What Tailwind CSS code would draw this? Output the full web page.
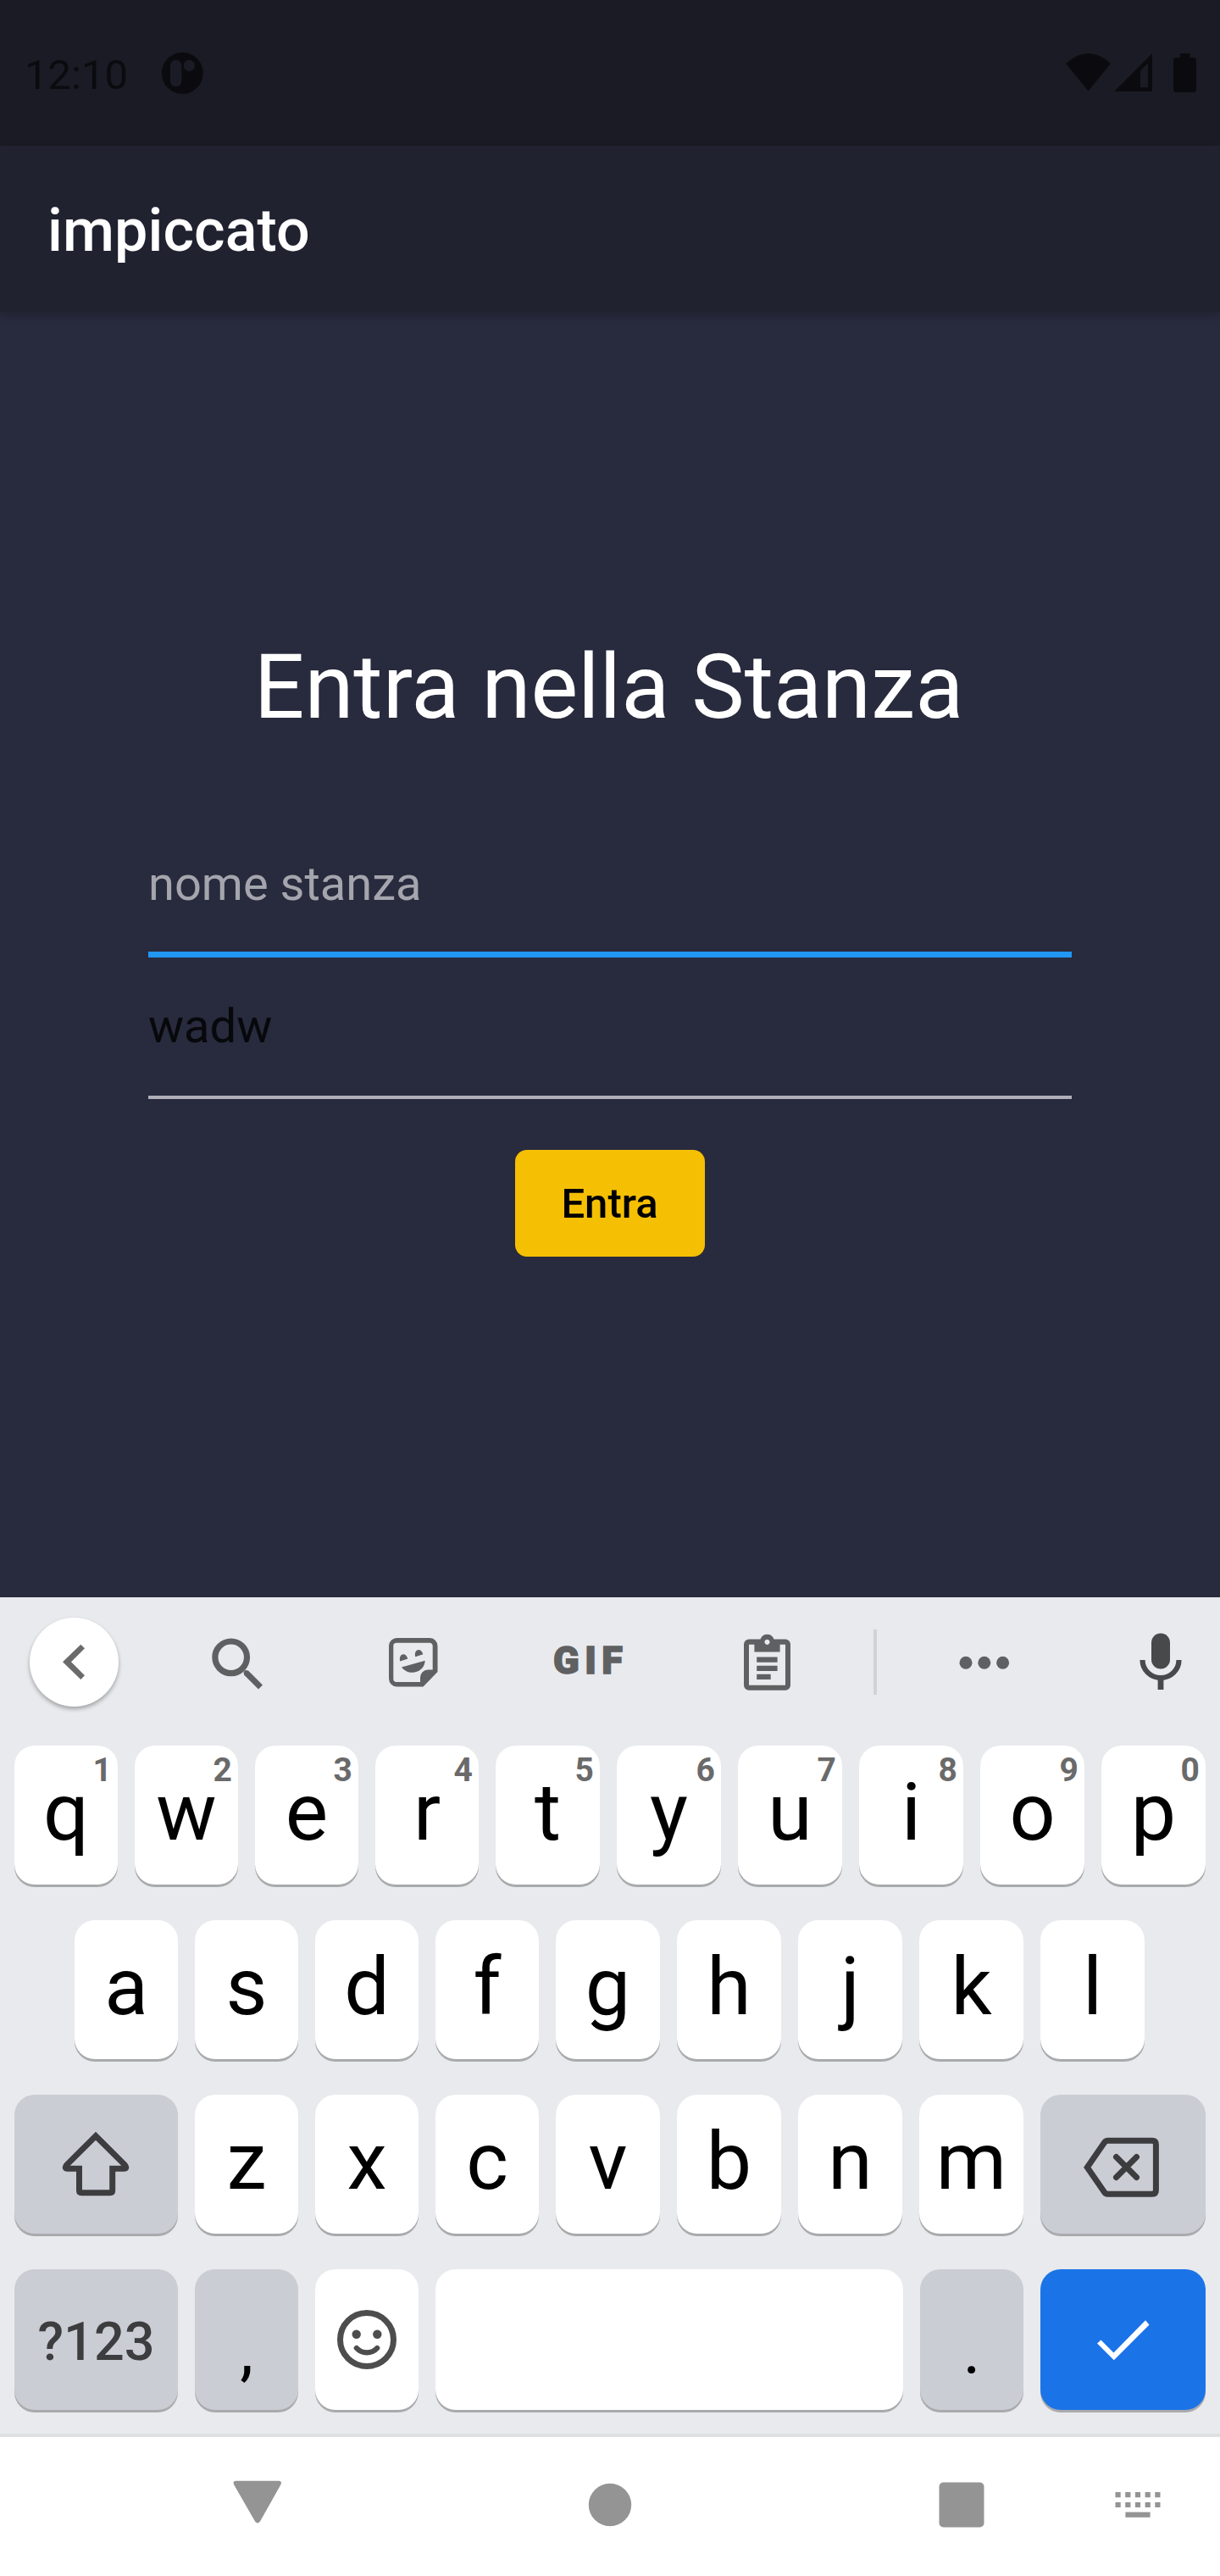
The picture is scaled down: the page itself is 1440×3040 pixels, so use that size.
<!DOCTYPE html>
<html lang="it">
<head>
<meta charset="utf-8">
<title>impiccato</title>
<script src="https://cdn.jsdelivr.net/npm/@tailwindcss/browser@4"></script>
</head>
<body class="w-[1440px] h-[3040px] overflow-hidden bg-[#282a3d] font-[Roboto,sans-serif] flex flex-col">

<!-- status bar -->
<header class="h-[172px] shrink-0 bg-[#1b1b25] flex justify-between text-[#0b0b0f]">
  <div class="flex pl-[29px] w-[260px] justify-between">
    <span class="text-[49px] leading-[177px]">12:10</span>
    <svg class="w-[70px] h-[172px]" viewBox="190 0 70 172"><circle cx="215.3" cy="86.3" r="24.5" fill="#0b0b0f"/><rect x="201" y="70.7" width="13.4" height="31.4" rx="6.7" fill="#1b1b25"/><circle cx="223.3" cy="77.4" r="6.6" fill="#1b1b25"/></svg>
  </div>
  <svg class="w-[190px] h-[172px]" viewBox="1250 0 190 172" fill="#0b0b0f">
    <path d="M1258 75Q1284.5 51 1311 75L1284.5 107.5Z"/>
    <path fill-rule="evenodd" d="M1315 108L1360 63V108ZM1346 83.5L1355 74.5V103H1346Z"/>
    <path d="M1393 63h11.5v5h4.5a3 3 0 0 1 3 3v35a3 3 0 0 1-3 3h-21a3 3 0 0 1-3-3V71a3 3 0 0 1 3-3h5z"/>
  </svg>
</header>

<!-- app bar -->
<div class="h-[196px] shrink-0 bg-[#212230] pl-14 shadow-[0_4px_10px_rgba(0,0,0,0.2)]">
  <h1 class="text-[70px] leading-[200px] font-medium tracking-[0.1px] text-white">impiccato</h1>
</div>

<main class="h-[1517px] shrink-0 flex flex-col items-center pt-[384px]">
  <h2 class="pr-[3px] text-[105px] leading-[120px] text-white">Entra nella Stanza</h2>
  <div class="w-[1090px] mt-[138px] h-[120px] border-b-[7px] border-[#2196f3] text-[56px] leading-[66px] text-[#a4a5ad]">nome stanza</div>
  <div class="w-[1090px] mt-[48px] h-[119px] border-b-[4px] border-[#b0aeb9] text-[56px] leading-[66px] text-[#07080b]">wadw</div>
  <button class="mt-[60px] w-[224px] h-[126px] rounded-[14px] bg-[#f5bf03] pt-[2px] pr-[1px] text-black text-[49px] font-medium">Entra</button>
</main>

<!-- keyboard -->
<section class="h-[987px] shrink-0 bg-[#e8eaed]">
  <div class="h-[153px] pl-[35px] flex items-center text-[#5f6062]">
    <div class="size-[105px] rounded-full bg-white shadow-[0_3px_5px_rgba(0,0,0,0.3)]">
      <svg class="size-[105px]" viewBox="35 1909 105 105" fill="#6b6b6b"><path d="M74 1961.3L95.3 1940.7L100 1945.3L84 1961.3L100 1977.3L95.3 1982Z"/></svg>
    </div>
    <svg class="ml-[100px] size-20" viewBox="240 1921.5 80 80" fill="currentColor"><circle cx="272.7" cy="1955.3" r="18.8" fill="none" stroke="currentColor" stroke-width="7.2"/><path d="M287.7 1972.7L289.3 1970.5L293 1971L310 1988L305 1993L288 1976Z"/></svg>
    <svg class="ml-[127px] size-20" viewBox="447 1921.5 80 80" fill="currentColor"><path fill-rule="evenodd" d="M468.5 1932.5H507a9.5 9.5 0 0 1 9.5 9.5V1972.5L499.5 1990H468.5a9.5 9.5 0 0 1-9.5-9.5V1942a9.5 9.5 0 0 1 9.5-9.5zM468 1938.3a3.7 3.7 0 0 0-3.7 3.7V1980.7a3.7 3.7 0 0 0 3.7 3.7H496V1979a9 9 0 0 1 9-9H510.7V1942a3.7 3.7 0 0 0-3.7-3.7z"/><path d="M472.3 1960c-2.5-8.5 6.5-12 9-3zM490.3 1954.8c-2.5-8.5 6.5-12 9-3zM474 1967L501.7 1959.3C501 1974 482 1978 474 1967z"/></svg>
    <span class="ml-[126px] w-[84px] text-[45px] leading-[56px] pb-1 font-black tracking-[6.5px] whitespace-nowrap [-webkit-text-stroke:1.5px_currentColor]">GIF</span>
    <svg class="ml-[128px] size-20 shrink-0" viewBox="865 1921.5 80 80" fill="currentColor"><path fill-rule="evenodd" d="M884 1934H897.5a8.5 8.5 0 0 1 16 0H927a6 6 0 0 1 6 6V1988.3a6 6 0 0 1-6 6H884a6 6 0 0 1-6-6V1940a6 6 0 0 1 6-6zM884 1940.3V1988.3H927V1940.3H920.6V1949H890.4V1940.3zM905.5 1934.2a3.1 3.1 0 1 0 0.01 0z"/><path d="M893.2 1955h24.4v6.2h-24.4zM893.2 1965.2h24.4v6.2h-24.4zM893.2 1975.2h16.5v6.2h-16.5z"/></svg>
    <div class="ml-[86px] w-1 h-[77px] bg-[#d0d2d6]"></div>
    <svg class="ml-[86px] size-20 shrink-0" viewBox="1121 1921.5 80 80" fill="currentColor"><circle cx="1140" cy="1961.7" r="7.5"/><circle cx="1161.8" cy="1961.7" r="7.5"/><circle cx="1183.6" cy="1961.7" r="7.5"/></svg>
    <svg class="ml-[129px] size-20 shrink-0" viewBox="1330 1921.5 80 80" fill="#48494b"><rect x="1359" y="1927" width="22" height="42" rx="11"/><path d="M1348.5 1958.5a21.5 21 0 0 0 43 0" fill="none" stroke="#48494b" stroke-width="6.2"/><path d="M1366.6 1979h6.8v14.5h-6.8z"/></svg>
  </div>

  <div class="px-[17px] pt-[22px] grid gap-y-[42px]">
    <div class="grid grid-cols-[repeat(4,122px)_repeat(6,123px)] gap-x-5 h-[164px]" data-keys="qwertyuiop" data-hints="1234567890"></div>
    <div class="grid grid-cols-[repeat(4,122px)_repeat(5,123px)] gap-x-5 h-[164px] px-[71px]" data-keys="asdfghjkl"></div>
    <div class="flex gap-x-5 h-[164px]">
      <div class="w-[193px] shrink-0 rounded-3xl bg-[#cbcdd5] shadow-[0_3px_0_#a9aaac]">
        <svg class="w-[193px] h-[164px]" viewBox="17 2472 193 164" fill="none" stroke="#3d3d3f" stroke-width="7"><path d="M113 2520.8L79 2554.5Q75 2559.3 80 2559.3H93.5V2585Q93.5 2587.7 96.2 2587.7H130Q132.7 2587.7 132.7 2585V2559.3H146Q151 2559.3 147 2554.5Z"/></svg>
      </div>
      <div class="grid grid-cols-[repeat(3,122px)_repeat(4,123px)] gap-x-5 flex-1" data-keys="zxcvbnm"></div>
      <div class="w-[195px] shrink-0 rounded-3xl bg-[#cbcdd5] shadow-[0_3px_0_#a9aaac]">
        <svg class="w-[195px] h-[164px]" viewBox="1228 2472 195 164" fill="none" stroke="#3d3d3f" stroke-width="7"><path d="M1283.3 2557.7L1303.5 2528.5Q1305 2526.3 1307.5 2526.3H1360Q1364.4 2526.3 1364.4 2530.7V2584.8Q1364.4 2589.2 1360 2589.2H1307.5Q1305 2589.2 1303.5 2587Z"/><path stroke-linecap="round" d="M1317.5 2545.5L1341.5 2569.5M1341.5 2545.5L1317.5 2569.5"/></svg>
      </div>
    </div>
    <div class="flex gap-x-5 h-[166px]">
      <div class="w-[193px] rounded-3xl bg-[#cbcdd5] shadow-[0_3px_0_#a9aaac] text-center text-[63px] leading-[171px] font-medium text-[#3d3d3f]">?123</div>
      <div class="w-[122px] rounded-3xl bg-[#cbcdd5] shadow-[0_3px_0_#a9aaac] text-center text-[80px] leading-[94px] pt-[49px] text-black">,</div>
      <div class="w-[122px] rounded-3xl bg-white shadow-[0_3px_0_#a9aaac]">
        <svg class="w-[122px] h-[166px]" viewBox="372 2678 122 166" fill="#4d4d4d"><circle cx="433" cy="2761" r="31.5" fill="none" stroke="#4d4d4d" stroke-width="7"/><circle cx="420.7" cy="2754.7" r="5.2"/><circle cx="445.3" cy="2754.7" r="5.2"/><path d="M420.8 2771Q425.5 2776.3 433 2776.3T445.2 2771" fill="none" stroke="#4d4d4d" stroke-width="6.2" stroke-linecap="round"/></svg>
      </div>
      <div class="flex-1 rounded-3xl bg-white shadow-[0_3px_0_#a9aaac]"></div>
      <div class="w-[122px] rounded-3xl bg-[#cbcdd5] shadow-[0_3px_0_#a9aaac] text-center text-[80px] leading-[94px] pt-[49px] text-black">.</div>
      <div class="w-[195px] rounded-3xl bg-[#1b73e8] shadow-[0_3px_0_#a9aaac]">
        <svg class="w-[195px] h-[166px]" viewBox="1228 2678 195 166" fill="white"><path d="M1295 2765.5L1299.5 2761.5L1314.5 2776.5L1352 2738.3L1356.5 2743.5L1314.8 2785.3Z"/></svg>
      </div>
    </div>
  </div>
</section>

<!-- navigation bar -->
<footer class="h-[168px] shrink-0 border-t-4 border-[#dfe0e0] bg-white">
  <svg class="w-[1440px] h-[164px]" viewBox="0 2876 1440 164" fill="#949494">
    <path d="M278.5 2927.7H329Q333 2927.7 331.5 2932L307 2975.5Q304 2979.5 301 2975.5L276 2932Q274.5 2927.7 278.5 2927.7Z"/>
    <circle cx="720" cy="2956" r="25.2"/>
    <rect x="1108.5" y="2929.5" width="53" height="53" rx="5"/>
    <path stroke="#949494" stroke-width="6.2" stroke-dasharray="6.2 5.5" fill="none" d="M1316.5 2944.2H1370M1316.5 2956H1370"/>
    <rect x="1328.4" y="2964.6" width="29.2" height="6.2"/>
  </svg>
</footer>

<template id="key">
  <div class="relative rounded-3xl bg-white shadow-[0_3px_0_#a9aaac] text-center text-[95px] leading-[157px] text-black"><span></span><small class="absolute right-[7px] top-[6px] text-[39px] leading-[46px] font-bold text-[#6a6a6a]"></small></div>
</template>
<script>
  document.querySelectorAll('[data-keys]').forEach(row => {
    [...row.dataset.keys].forEach((ch, i) => {
      const key = document.getElementById('key').content.cloneNode(true);
      key.querySelector('span').textContent = ch;
      const hint = key.querySelector('small');
      if (row.dataset.hints) hint.textContent = row.dataset.hints[i]; else hint.remove();
      row.append(key);
    });
  });
</script>
</body>
</html>
